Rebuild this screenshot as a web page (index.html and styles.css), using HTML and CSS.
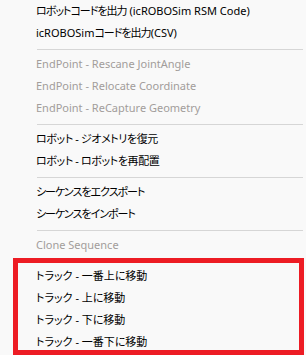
FILE: index.html
```html
<!DOCTYPE html>
<html lang="ja">
<head>
    <meta charset="UTF-8">
    <title>Menu</title>
    <link rel="stylesheet" href="styles.css">
</head>
<body>
    <ul class="menu">
        <li class="item"><span class="tight">ロボットコードを出力</span> (icROBOSim RSM Code)</li>
        <li class="item">icROBOSim<span class="tight">コードを出力</span>(CSV)</li>
        <li class="sep"></li>
        <li class="item off">EndPoint - Rescane JointAngle</li>
        <li class="item off">EndPoint - Relocate Coordinate</li>
        <li class="item off">EndPoint - ReCapture Geometry</li>
        <li class="sep"></li>
        <li class="item snug">ロボット - ジオメトリを復元</li>
        <li class="item snug">ロボット - ロボットを再配置</li>
        <li class="sep"></li>
        <li class="item tight">シーケンスをエクスポート</li>
        <li class="item tight">シーケンスをインポート</li>
        <li class="sep"></li>
        <li class="item off">Clone Sequence</li>
        <li class="sep"></li>
        <li class="item">トラック - 一番上に移動</li>
        <li class="item">トラック - 上に移動</li>
        <li class="item">トラック - 下に移動</li>
        <li class="item">トラック - 一番下に移動</li>
    </ul>
    <div class="mark"></div>
</body>
</html>
```

FILE: styles.css
```css
body{
    margin: 0;
    background-color: #f9f9f9;
    font: normal 11px "Noto Sans", "Noto Sans CJK JP", sans-serif;
    font-feature-settings: "palt";
    color: #000;
    overflow: hidden;
}
.menu{
    list-style: none;
    margin: 0;
    padding: 0;
}
.item{
    height: 22px;
    line-height: 22px;
    padding-left: 36px;
    white-space: nowrap;
}
.item.off{
    color: #a29d9b;
}
.tight{
    letter-spacing: -1px;
}
.snug{
    letter-spacing: -0.4px;
}
.sep{
    height: 1px;
    margin: 5px 3px 3px 37px;
    background-color: #d6d6d6;
}
.mark{
    position: absolute;
    left: 13px;
    top: 258px;
    width: 291px;
    height: 97px;
    box-sizing: border-box;
    border: 5px solid #ed1c24;
}
```
